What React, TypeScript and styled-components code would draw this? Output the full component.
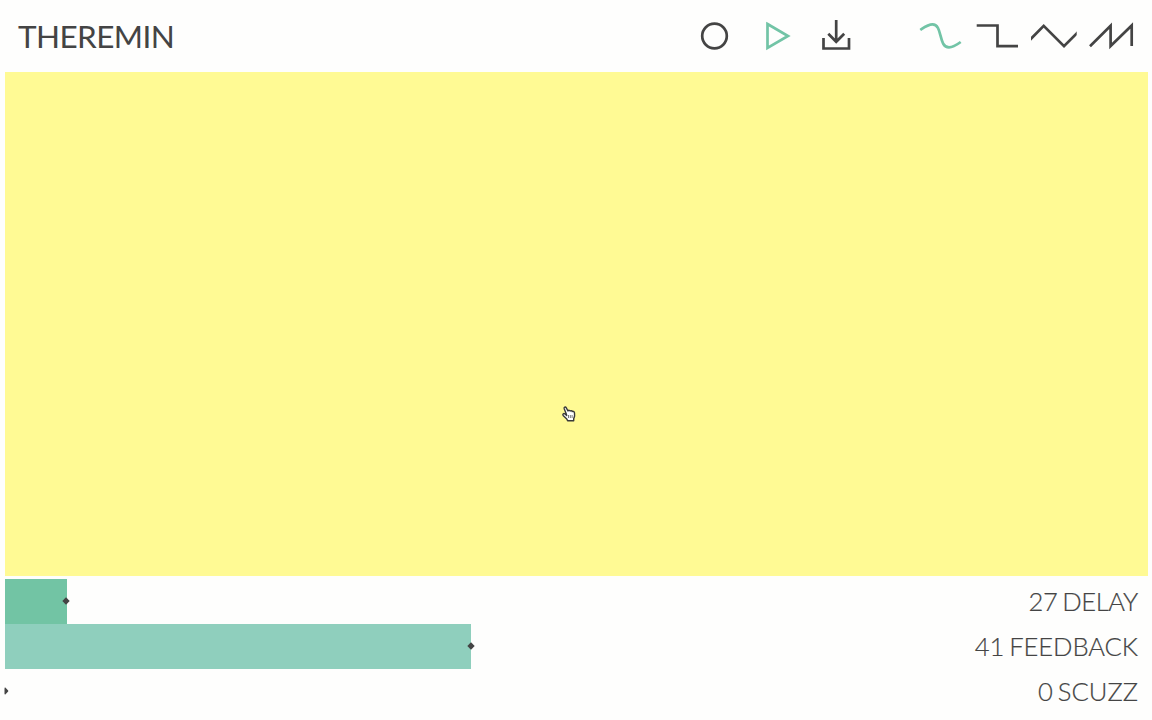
import React from "react";
import styled, { createGlobalStyle } from "styled-components";

const ink = "#444444";
const mint = "#72c4a6";

const GlobalStyle = createGlobalStyle`
  html, body { margin: 0; background: #fefefd; }
  body { font-family: Lato, sans-serif; color: ${ink}; overflow: hidden; }
`;

const Page = styled.main`
  display: flex;
  flex-direction: column;
  width: 1152px;
  height: 720px;
`;

const Header = styled.header`
  display: flex;
  align-items: center;
  height: 72px;
  padding: 0 12px 0 18px;
`;

const Title = styled.h1`
  flex: 1;
  margin: 0;
  font-size: 31.5px;
  line-height: 40px;
  font-weight: 400;
  letter-spacing: -0.6px;
`;

const Transport = styled.nav`
  display: flex;
  gap: 13px;
  margin-right: 52px;
`;

const Waves = styled.nav`
  display: flex;
`;

const Icon = styled.svg<{ $active?: boolean }>`
  display: block;
  height: 72px;
  fill: none;
  stroke: ${(p) => (p.$active ? mint : ink)};
  stroke-width: 2.7;
`;

const Pad = styled.section`
  position: relative;
  height: 504px;
  margin: 0 4.5px 3px;
  background: #fffa94;
`;

const Pointer = styled.svg`
  position: absolute;
  left: 556.5px;
  top: 333px;
`;

const Sliders = styled.section`
  margin: 0 4.5px;
`;

const Row = styled.div`
  display: flex;
  align-items: center;
  justify-content: space-between;
  height: 45px;
  padding-right: 9.5px;
`;

const Fill = styled.div<{ $color: string }>`
  position: relative;
  height: 45px;
  background: ${(p) => p.$color};
`;

const Handle = styled.svg<{ $clipped?: boolean }>`
  position: absolute;
  right: -3.5px;
  top: 18px;
  clip-path: ${(p) => (p.$clipped ? "inset(0 0 0 4px)" : "none")};
`;

const Label = styled.span<{ $tracking: number }>`
  padding-bottom: 1px;
  font-size: 25.6px;
  line-height: 32px;
  font-weight: 300;
  letter-spacing: ${(p) => p.$tracking}px;
  word-spacing: -2px;
  white-space: nowrap;
  -webkit-text-stroke: 0.2px ${ink};
`;

const sliders = [
  { name: "DELAY", value: 27, width: 62, color: "#72c4a4", tracking: -0.35 },
  { name: "FEEDBACK", value: 41, width: 466.5, color: "#8fcfbd", tracking: -0.08 },
  { name: "SCUZZ", value: 0, width: 0.5, color: "transparent", tracking: 0 },
];

const waves = [
  { id: "sine", d: "M8.3 30 C12 27.5 16 24.4 20.5 24.4 C31 24.4 26 47.4 37 47.4 C41 47.4 45 44.7 48.7 42" },
  { id: "square", d: "M7.7 25.5 H28.5 V46.2 H49" },
  { id: "triangle", d: "M4 39.8 L17.7 25.8 L38 46.1 L52 32.1" },
  { id: "sawtooth", d: "M7 46.3 L27.6 25.8 V46 L48.7 25.5 V46" },
];

export default function App() {
  return (
    <Page>
      <GlobalStyle />
      <Header>
        <Title>THEREMIN</Title>
        <Transport>
          <Icon width="48" viewBox="0 0 48 72">
            <circle cx="24.5" cy="36" r="12.3" />
          </Icon>
          <Icon width="48" viewBox="0 0 48 72" $active>
            <path d="M16.5 24 L37 36 L16.5 48 Z" />
          </Icon>
          <Icon width="48" viewBox="0 0 48 72">
            <path d="M24.2 20 V42 M16.3 33.7 L24.2 41.8 L32.2 33.7 M11.5 38 V48.5 H37 V38" />
          </Icon>
        </Transport>
        <Waves>
          {waves.map((w, i) => (
            <Icon key={w.id} width="57" viewBox="0 0 57 72" $active={i === 0}>
              {w.id === "triangle" ? (
                <svg x="5" y="0" width="45.7" height="72" viewBox="5 0 45.7 72">
                  <path d={w.d} />
                </svg>
              ) : (
                <path d={w.d} />
              )}
            </Icon>
          ))}
        </Waves>
      </Header>
      <Pad>
        <Pointer width="16" height="18" viewBox="0 0 16 18">
          <path
            d="M5.2 8.8 L3.2 3.8 C2.6 2 4.5 1.3 5.3 2.8 L7 6 C7.6 5 8.8 5.2 9.1 6 C9.8 5.3 11 5.6 11.2 6.5 C12.3 6 13.4 6.7 13.5 8 L13.6 11 L12.7 13.8 V15.8 H6.6 L5.8 14 L2.1 10.5 C1.2 9 2.8 8 4 9 L5.7 10.5 Z"
            fill="#fff"
            stroke="#393939"
            strokeWidth="1.4"
            strokeLinejoin="round"
          />
          <path d="M7.5 10 V13 M9.3 10 V13 M11.1 10 V13" stroke="#555" strokeWidth="0.8" />
        </Pointer>
      </Pad>
      <Sliders>
        {sliders.map((s) => (
          <Row key={s.name}>
            <Fill $color={s.color} style={{ width: s.width }}>
              <Handle width="8" height="8" viewBox="0 0 8 8" $clipped={s.value === 0}>
                <path d="M4 0.3 L7.7 4 L4 7.7 L0.3 4 Z" fill={ink} />
              </Handle>
            </Fill>
            <Label $tracking={s.tracking}>
              {s.value} {s.name}
            </Label>
          </Row>
        ))}
      </Sliders>
    </Page>
  );
}
